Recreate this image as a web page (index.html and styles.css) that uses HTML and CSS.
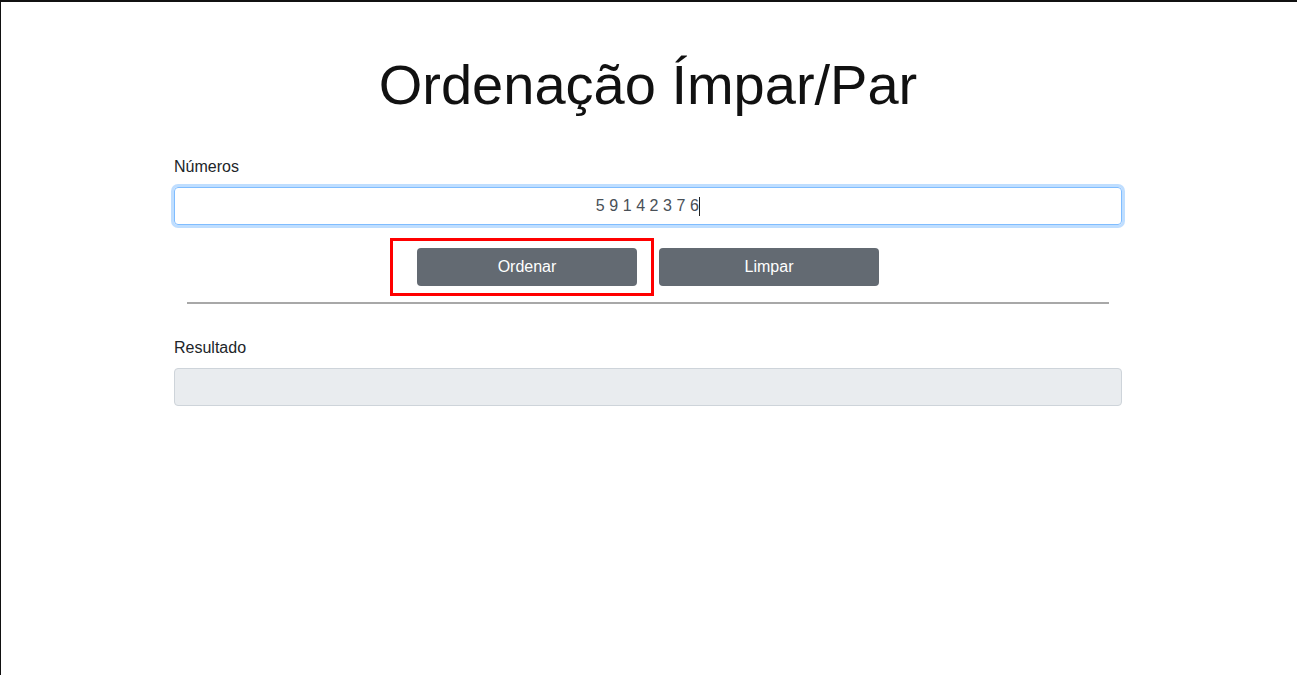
FILE: index.html
```html
<!DOCTYPE html>
<html lang="pt-BR">
<head>
<meta charset="utf-8">
<title>Ordenação Ímpar/Par</title>
<link rel="stylesheet" href="styles.css">
</head>
<body>
<div class="frame">
  <main class="app">
    <h1 class="title">Ordenação Ímpar/Par</h1>
    <div class="field">
      <label class="label" for="numeros">Números</label>
      <div class="input input-focus"><span class="value">5 9 1 4 2 3 7 6</span><span class="caret"></span></div>
    </div>
    <div class="actions">
      <button class="btn btn-marked" type="button">Ordenar<span class="mark"></span></button>
      <button class="btn" type="button">Limpar</button>
    </div>
    <hr class="divider">
    <div class="field field-result">
      <label class="label">Resultado</label>
      <div class="input input-readonly"></div>
    </div>
  </main>
</div>
</body>
</html>
```

FILE: styles.css
```css
html, body {
  margin: 0;
  padding: 0;
  background: #fff;
}
body {
  font-family: "Liberation Sans", Arial, sans-serif;
  color: #212529;
  font-size: 16px;
  line-height: 1.5;
}
.frame {
  min-height: 100vh;
  box-sizing: border-box;
  border-top: 2px solid #111;
  border-left: 1px solid #111;
  padding-right: 2px;
}
.app {
  width: 948px;
  margin: 0 auto;
  display: flex;
  flex-direction: column;
}
.title {
  margin: 49px 0 0;
  font-size: 56px;
  font-weight: 400;
  line-height: 1.2;
  text-align: center;
  color: #111;
}
.field {
  margin-top: 37px;
  display: flex;
  flex-direction: column;
}
.label {
  font-size: 16px;
  line-height: 24px;
  margin-bottom: 8px;
  color: #212529;
}
.input {
  height: 38px;
  box-sizing: border-box;
  border: 1px solid #ced4da;
  border-radius: 4px;
  display: flex;
  align-items: center;
  justify-content: center;
  font-size: 16px;
  color: #495057;
}
.input-focus {
  border-color: #80bdff;
  box-shadow: 0 0 0 3px rgba(0, 123, 255, 0.25);
}
.value {
  letter-spacing: 0.3px;
  word-spacing: -0.5px;
}
.caret {
  display: inline-block;
  width: 1px;
  height: 19px;
  background: #222;
  margin-left: 0;
}
.input-readonly {
  background: #e9ecef;
}
.actions {
  margin-top: 23px;
  display: flex;
  justify-content: center;
  gap: 22px;
}
.btn {
  position: relative;
  width: 220px;
  height: 38px;
  border: none;
  border-radius: 4px;
  background: #636a72;
  color: #fff;
  font-family: "Liberation Sans", Arial, sans-serif;
  font-size: 16px;
  padding: 0;
}
.mark {
  position: absolute;
  left: -27px;
  right: -17px;
  top: -10px;
  bottom: -10px;
  border: 3px solid #ff0000;
  pointer-events: none;
}
.divider {
  margin: 16px 13px 0;
  border: none;
  border-top: 2px solid #a8a8a8;
  height: 0;
}
.field-result {
  margin-top: 32px;
}
```
